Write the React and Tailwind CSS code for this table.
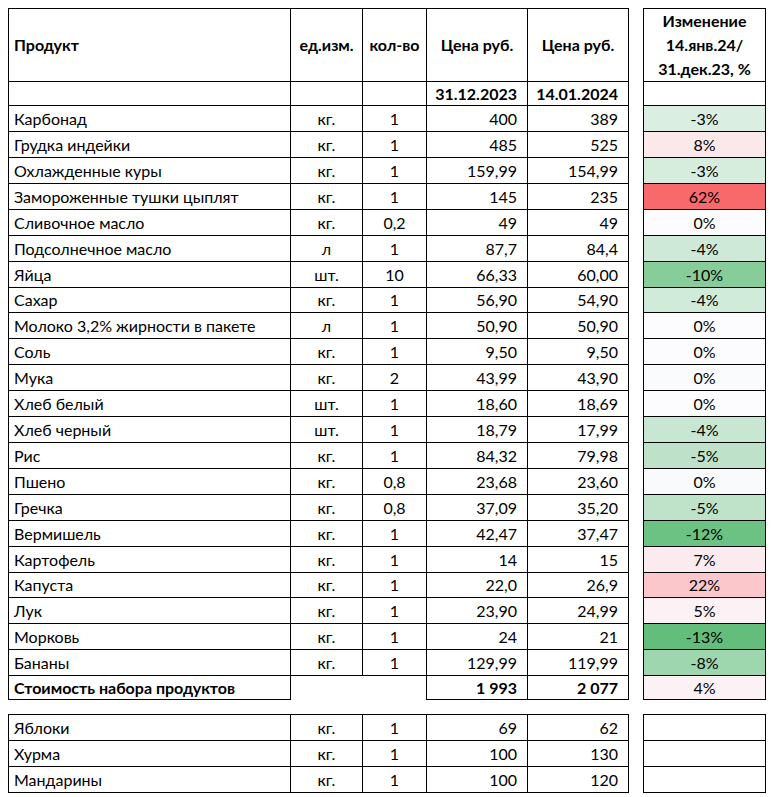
import React from 'react';

const rows = [
    ['Карбонад', 'кг.', '1', '400', '389', '-3%', 'bg-[#daeee2]'],
    ['Грудка индейки', 'кг.', '1', '485', '525', '8%', 'bg-[#fbe8eb]'],
    ['Охлажденные куры', 'кг.', '1', '159,99', '154,99', '-3%', 'bg-[#d6edde]'],
    ['Замороженные тушки цыплят', 'кг.', '1', '145', '235', '62%', 'bg-[#f8696b]'],
    ['Сливочное масло', 'кг.', '0,2', '49', '49', '0%', 'bg-[#fcfcff]'],
    ['Подсолнечное масло', 'л', '1', '87,7', '84,4', '-4%', 'bg-[#cee9d7]'],
    ['Яйца', 'шт.', '10', '66,33', '60,00', '-10%', 'bg-[#87cd9a]'],
    ['Сахар', 'кг.', '1', '56,90', '54,90', '-4%', 'bg-[#d1ebda]'],
    ['Молоко 3,2% жирности в пакете', 'л', '1', '50,90', '50,90', '0%', 'bg-[#fcfcff]'],
    ['Соль', 'кг.', '1', '9,50', '9,50', '0%', 'bg-[#fcfcff]'],
    ['Мука', 'кг.', '2', '43,99', '43,90', '0%', 'bg-[#fafbfd]'],
    ['Хлеб белый', 'шт.', '1', '18,60', '18,69', '0%', 'bg-[#fcfbfe]'],
    ['Хлеб черный', 'шт.', '1', '18,79', '17,99', '-4%', 'bg-[#c8e7d2]'],
    ['Рис', 'кг.', '1', '84,32', '79,98', '-5%', 'bg-[#bde2c9]'],
    ['Пшено', 'кг.', '0,8', '23,68', '23,60', '0%', 'bg-[#f8fafb]'],
    ['Гречка', 'кг.', '0,8', '37,09', '35,20', '-5%', 'bg-[#bee3c9]'],
    ['Вермишель', 'кг.', '1', '42,47', '37,47', '-12%', 'bg-[#6cc283]'],
    ['Картофель', 'кг.', '1', '14', '15', '7%', 'bg-[#fcebee]'],
    ['Капуста', 'кг.', '1', '22,0', '26,9', '22%', 'bg-[#fbc7ca]'],
    ['Лук', 'кг.', '1', '23,90', '24,99', '5%', 'bg-[#fcf1f4]'],
    ['Морковь', 'кг.', '1', '24', '21', '-13%', 'bg-[#63be7b]'],
    ['Бананы', 'кг.', '1', '129,99', '119,99', '-8%', 'bg-[#9ed6ae]'],
];

const extra = [
    ['Яблоки', 'кг.', '1', '69', '62'],
    ['Хурма', 'кг.', '1', '100', '130'],
    ['Мандарины', 'кг.', '1', '100', '120'],
];

const cell = 'border border-black p-0 leading-none';

const Cols = () => (
    <colgroup>
        <col className="w-[282px]" />
        <col className="w-[72px]" />
        <col className="w-[64px]" />
        <col className="w-[101px]" />
        <col className="w-[101px]" />
    </colgroup>
);

const ProductRow = ({ r, short }) => (
    <tr className={short ? 'h-[25px]' : 'h-[26px]'}>
        <td className={`${cell} pl-[5px] text-left`}>{r[0]}</td>
        <td className={`${cell} text-center`}>{r[1]}</td>
        <td className={`${cell} text-center`}>{r[2]}</td>
        <td className={`${cell} pr-[10px] text-right`}>{r[3]}</td>
        <td className={`${cell} pr-[10px] text-right`}>{r[4]}</td>
    </tr>
);

export default function App() {
    return (
        <div className="bg-white min-h-[797px] pt-2 pl-2 text-[16px] text-black font-['Lato',sans-serif]">
            <div className="flex gap-[14px]">
                {/* main table */}
                <table className="table-fixed w-[621px]">
                    <Cols />
                    <tbody>
                        <tr className="h-[73px] font-bold">
                            <td className={`${cell} pl-[5px] text-left`}>Продукт</td>
                            <td className={`${cell} text-center`}>ед.изм.</td>
                            <td className={`${cell} text-center`}>кол-во</td>
                            <td className={`${cell} text-center`}>Цена руб.</td>
                            <td className={`${cell} text-center`}>Цена руб.</td>
                        </tr>
                        <tr className="h-[24px] font-bold">
                            <td className={cell}></td>
                            <td className={cell}></td>
                            <td className={cell}></td>
                            <td className={`${cell} pr-[10px] text-right`}>31.12.2023</td>
                            <td className={`${cell} pr-[10px] text-right`}>14.01.2024</td>
                        </tr>
                        {rows.map((r, i) => (
                            <ProductRow key={r[0]} r={r} short={i === 7 || i === 18} />
                        ))}
                        <tr className="h-[24px] font-bold">
                            <td className={`${cell} pl-[5px] text-left`}>Стоимость набора продуктов</td>
                            <td className="p-0"></td>
                            <td className="p-0"></td>
                            <td className={`${cell} pr-[10px] text-right`}>1 993</td>
                            <td className={`${cell} pr-[10px] text-right`}>2 077</td>
                        </tr>
                    </tbody>
                </table>

                {/* change column */}
                <table className="table-fixed w-[123px]">
                    <tbody>
                        <tr className="h-[73px]">
                            <td className={`${cell} text-center font-bold`}>
                                <div className="leading-[24px]">
                                    Изменение
                                    <br />
                                    14.янв.24/
                                    <br />
                                    31.дек.23, %
                                </div>
                            </td>
                        </tr>
                        <tr className="h-[24px]">
                            <td className={cell}></td>
                        </tr>
                        {rows.map((r, i) => (
                            <tr key={r[0]} className={i === 7 || i === 18 ? 'h-[25px]' : 'h-[26px]'}>
                                <td className={`${cell} text-center ${r[6]}`}>{r[5]}</td>
                            </tr>
                        ))}
                        <tr className="h-[24px]">
                            <td className={`${cell} text-center bg-[#fcf2f5]`}>4%</td>
                        </tr>
                    </tbody>
                </table>
            </div>

            <div className="flex gap-[14px] mt-[14px]">
                <table className="table-fixed w-[621px]">
                    <Cols />
                    <tbody>
                        {extra.map((r) => (
                            <ProductRow key={r[0]} r={r} />
                        ))}
                    </tbody>
                </table>
                <table className="table-fixed w-[123px]">
                    <tbody>
                        {extra.map((r) => (
                            <tr key={r[0]} className="h-[26px]">
                                <td className={cell}></td>
                            </tr>
                        ))}
                    </tbody>
                </table>
            </div>
        </div>
    );
}
